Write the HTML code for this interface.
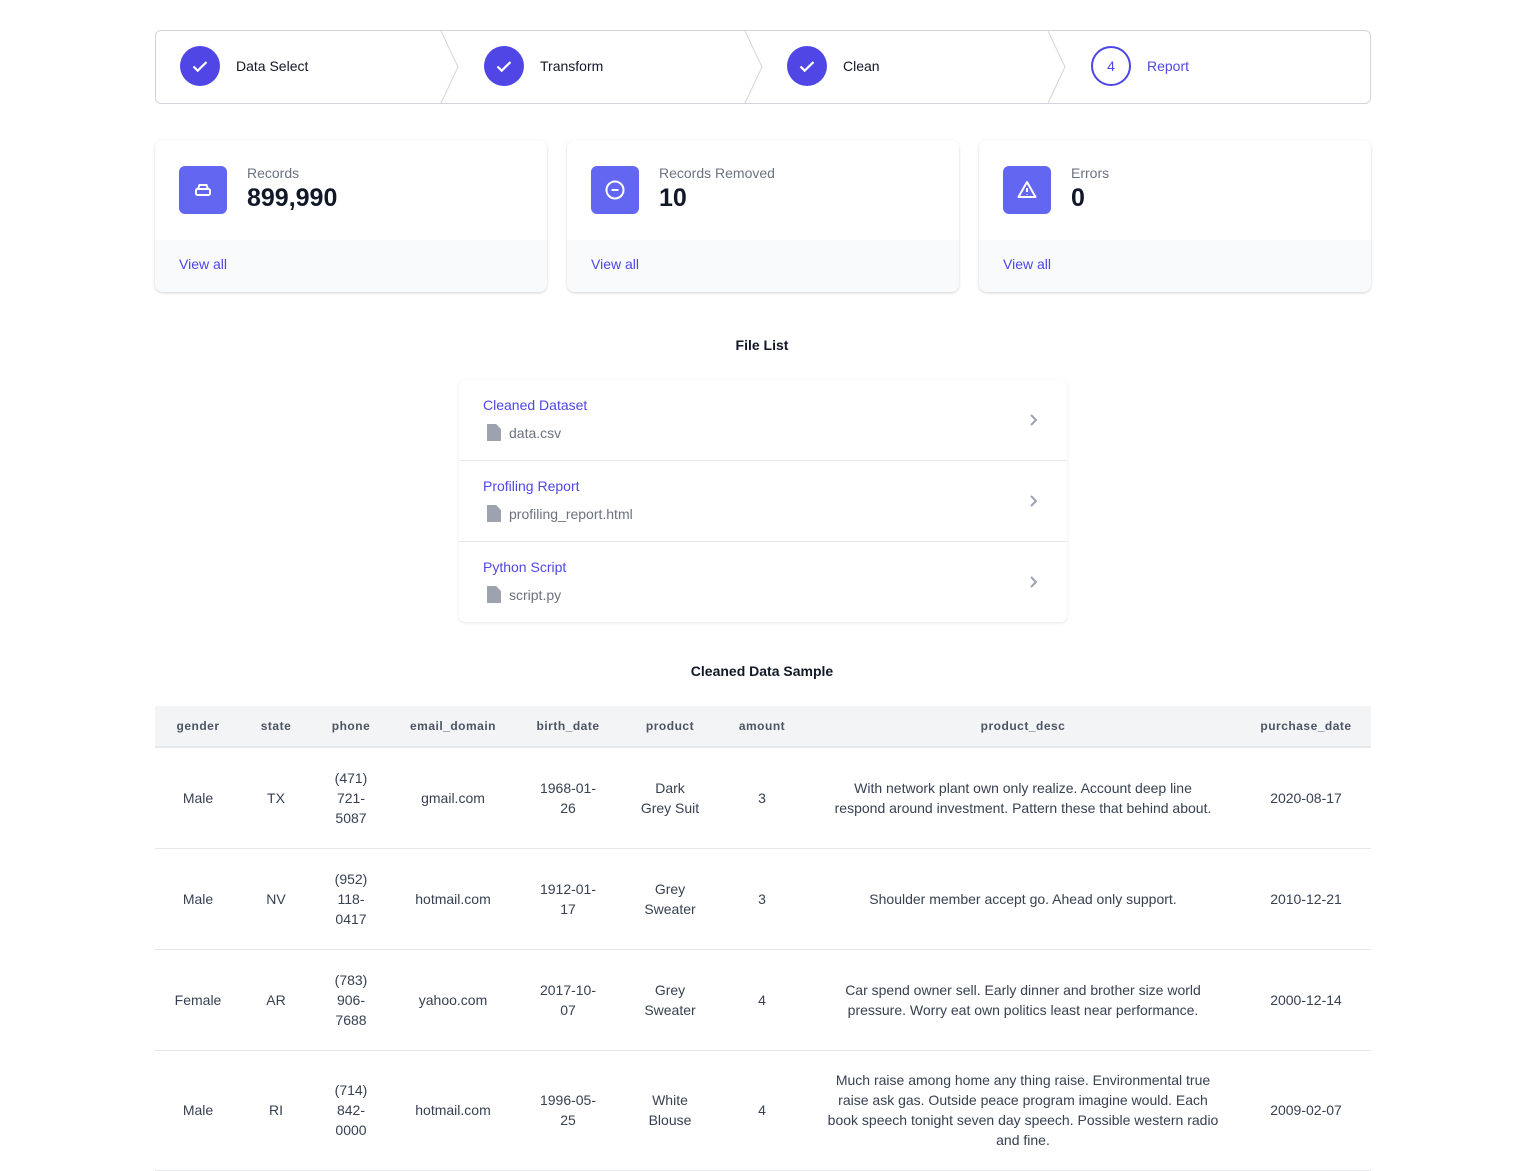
<!DOCTYPE html>
<html><head><meta charset="utf-8">
<style>
*{box-sizing:border-box;margin:0;padding:0}
body{width:1524px;height:1121px;overflow:hidden;background:#fff;font-family:"Liberation Sans",Arial,sans-serif;color:#111827;position:relative}
.steps{position:absolute;left:155px;top:30px;width:1216px;height:74px;border:1px solid #d1d5db;border-radius:6px}
.step{position:absolute;top:-1px;height:72px;display:flex;align-items:center}
.circ{width:40px;height:40px;border-radius:50%;background:#4f46e5;display:flex;align-items:center;justify-content:center}
.circ.o{background:#fff;border:2px solid #4f46e5;color:#4f46e5;font-size:14px}
.step span{margin-left:16px;font-size:14px;color:#111827}
.chev{position:absolute;top:0}
.card{position:absolute;top:140px;width:392px;height:152px;border-radius:8px;box-shadow:0 1px 3px rgba(0,0,0,.12),0 1px 2px rgba(0,0,0,.06);overflow:hidden;background:#fff}
.card .ic{position:absolute;left:24px;top:26px;width:48px;height:48px;border-radius:6px;background:#6366f1;display:flex;align-items:center;justify-content:center}
.card .lb{position:absolute;left:92px;top:25px;font-size:14px;color:#6b7280}
.card .vl{position:absolute;left:92px;top:44px;font-size:25px;font-weight:bold;color:#111827}
.card .ft{position:absolute;left:0;top:100px;width:100%;height:52px;background:#f9fafb;padding:16px 24px;font-size:14px;color:#4f46e5}
.ttl{position:absolute;left:0;width:1524px;text-align:center;font-size:14px;font-weight:bold;color:#111827}
.list{position:absolute;left:459px;top:380px;width:608px;height:242px;border-radius:6px;box-shadow:0 1px 3px rgba(0,0,0,.1)}
.row{position:absolute;left:0;width:608px;height:81px;border-bottom:1px solid #e5e7eb}
.row .t{position:absolute;left:24px;top:17px;font-size:14px;color:#4f46e5}
.row .s{position:absolute;left:28px;top:44px;font-size:14px;color:#6b7280;display:flex;align-items:center}
.row .s i{display:inline-block;width:14px;height:17px;background:#9ca3af;margin-right:8px;clip-path:polygon(0 0,65% 0,100% 30%,100% 100%,0 100%)}
.row svg{position:absolute;right:28px;top:33px}
table{position:absolute;left:155px;top:706px;width:1216px;border-collapse:collapse;table-layout:fixed}
th{height:41px;background:#f3f4f6;font-size:12px;font-weight:bold;color:#4b5563;letter-spacing:.5px;border-bottom:2px solid #e5e7eb;white-space:nowrap}
td{height:101px;font-size:14px;line-height:20px;color:#374151;text-align:center;border-bottom:1px solid #e5e7eb;white-space:nowrap;vertical-align:middle}
</style></head><body>
<div class="steps">
 <div class="step" style="left:24px"><div class="circ"><svg width="22" height="22" viewBox="0 0 22 22"><path d="M4.5 11.5l4.2 4.2L17.5 7" fill="none" stroke="#fff" stroke-width="2.2"/></svg></div><span>Data Select</span></div>
 <div class="step" style="left:328px"><div class="circ"><svg width="22" height="22" viewBox="0 0 22 22"><path d="M4.5 11.5l4.2 4.2L17.5 7" fill="none" stroke="#fff" stroke-width="2.2"/></svg></div><span>Transform</span></div>
 <div class="step" style="left:631px"><div class="circ"><svg width="22" height="22" viewBox="0 0 22 22"><path d="M4.5 11.5l4.2 4.2L17.5 7" fill="none" stroke="#fff" stroke-width="2.2"/></svg></div><span>Clean</span></div>
 <div class="step" style="left:935px"><div class="circ o">4</div><span style="color:#4f46e5">Report</span></div>
 <svg class="chev" style="left:284px" width="20" height="72"><path d="M1 0L18 36L1 72" fill="none" stroke="#d1d5db"/></svg>
 <svg class="chev" style="left:588px" width="20" height="72"><path d="M1 0L18 36L1 72" fill="none" stroke="#d1d5db"/></svg>
 <svg class="chev" style="left:891px" width="20" height="72"><path d="M1 0L18 36L1 72" fill="none" stroke="#d1d5db"/></svg>
</div>

<div class="card" style="left:155px"><div class="ic"><svg width="24" height="24" viewBox="0 0 24 24" fill="none" stroke="#fff" stroke-width="2"><rect x="5" y="11" width="14" height="6" rx="1.5"/><path d="M7 11l1.5-4h7L17 11"/></svg></div><div class="lb">Records</div><div class="vl">899,990</div><div class="ft">View all</div></div>
<div class="card" style="left:567px"><div class="ic"><svg width="24" height="24" viewBox="0 0 24 24" fill="none" stroke="#fff" stroke-width="2"><circle cx="12" cy="12" r="8.5"/><path d="M8.5 12h7"/></svg></div><div class="lb">Records Removed</div><div class="vl">10</div><div class="ft">View all</div></div>
<div class="card" style="left:979px"><div class="ic"><svg width="24" height="24" viewBox="0 0 24 24" fill="none" stroke="#fff" stroke-width="2" stroke-linejoin="round"><path d="M12 4L3.5 19h17z"/><path d="M12 10v4M12 16.5v.5"/></svg></div><div class="lb">Errors</div><div class="vl">0</div><div class="ft">View all</div></div>

<div class="ttl" style="top:337px">File List</div>
<div class="list">
 <div class="row" style="top:0"><div class="t">Cleaned Dataset</div><div class="s"><i></i>data.csv</div><svg width="10" height="14" viewBox="0 0 10 14"><path d="M2 2l5 5-5 5" fill="none" stroke="#9ca3af" stroke-width="2"/></svg></div>
 <div class="row" style="top:81px"><div class="t">Profiling Report</div><div class="s"><i></i>profiling_report.html</div><svg width="10" height="14" viewBox="0 0 10 14"><path d="M2 2l5 5-5 5" fill="none" stroke="#9ca3af" stroke-width="2"/></svg></div>
 <div class="row" style="top:162px;border-bottom:none"><div class="t">Python Script</div><div class="s"><i></i>script.py</div><svg width="10" height="14" viewBox="0 0 10 14"><path d="M2 2l5 5-5 5" fill="none" stroke="#9ca3af" stroke-width="2"/></svg></div>
</div>

<div class="ttl" style="top:663px">Cleaned Data Sample</div>
<table>
<colgroup><col style="width:86px"><col style="width:70px"><col style="width:80px"><col style="width:124px"><col style="width:106px"><col style="width:98px"><col style="width:86px"><col style="width:436px"><col style="width:130px"></colgroup>
<tr><th>gender</th><th>state</th><th>phone</th><th>email_domain</th><th>birth_date</th><th>product</th><th>amount</th><th>product_desc</th><th>purchase_date</th></tr>
<tr><td>Male</td><td>TX</td><td>(471)<br>721-<br>5087</td><td>gmail.com</td><td>1968-01-<br>26</td><td>Dark<br>Grey Suit</td><td>3</td><td>With network plant own only realize. Account deep line<br>respond around investment. Pattern these that behind about.</td><td>2020-08-17</td></tr>
<tr><td>Male</td><td>NV</td><td>(952)<br>118-<br>0417</td><td>hotmail.com</td><td>1912-01-<br>17</td><td>Grey<br>Sweater</td><td>3</td><td>Shoulder member accept go. Ahead only support.</td><td>2010-12-21</td></tr>
<tr><td>Female</td><td>AR</td><td>(783)<br>906-<br>7688</td><td>yahoo.com</td><td>2017-10-<br>07</td><td>Grey<br>Sweater</td><td>4</td><td>Car spend owner sell. Early dinner and brother size world<br>pressure. Worry eat own politics least near performance.</td><td>2000-12-14</td></tr>
<tr><td style="height:120px">Male</td><td>RI</td><td>(714)<br>842-<br>0000</td><td>hotmail.com</td><td>1996-05-<br>25</td><td>White<br>Blouse</td><td>4</td><td>Much raise among home any thing raise. Environmental true<br>raise ask gas. Outside peace program imagine would. Each<br>book speech tonight seven day speech. Possible western radio<br>and fine.</td><td>2009-02-07</td></tr>
</table>
</body></html>
